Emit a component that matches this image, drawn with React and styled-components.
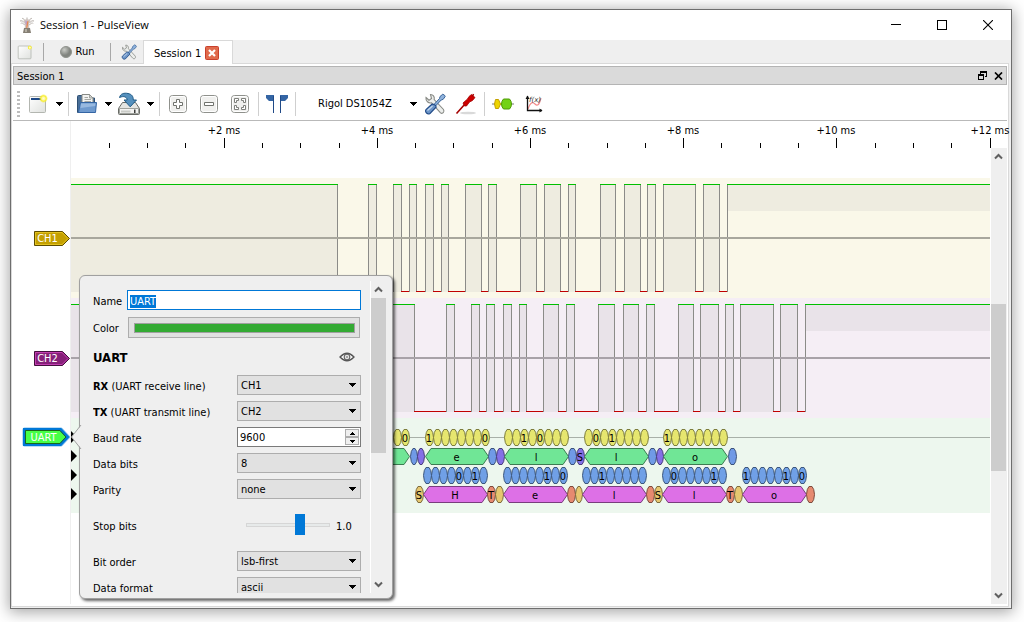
import React, { useEffect, useRef } from "react";
import styled, { createGlobalStyle } from "styled-components";

const UI_FONT = '"DejaVu Sans Condensed", "DejaVu Sans", sans-serif';

const GlobalStyle = createGlobalStyle`
  *, *::before, *::after { box-sizing: border-box; }
  body { margin: 0; background: #fff; font: 11px/14px ${UI_FONT}; color: #000; }
  button, input, select { font: inherit; color: inherit; margin: 0; border-radius: 0; }
  svg { display: block; flex: none; }
`;

/* ---------- window frame ---------- */

const Desktop = styled.div`
  display: flex;
  min-height: 100vh;
  padding: 9px 12px 13px 10px;
`;

const Window = styled.main`
  display: flex;
  flex-direction: column;
  flex: 1;
  min-width: 0;
  border: 1px solid #6e6e6e;
  background: #efefef;
  box-shadow: 0 2px 14px 1px rgba(0, 0, 0, 0.36);
`;

const TitleBar = styled.header`
  display: flex;
  align-items: center;
  height: 30px;
  padding-left: 8px;
  background: #fff;
`;

const Title = styled.h1`
  flex: 1;
  margin: 0;
  padding-left: 5px;
  font: 400 11px/14px "Open Sans", "Noto Sans", sans-serif;
`;

const CaptionButton = styled.button`
  display: grid;
  place-items: center;
  width: 46px;
  height: 30px;
  padding: 0;
  border: 0;
  background: none;
`;

/* ---------- session tabs ---------- */

const TabRow = styled.div`
  display: flex;
  align-items: center;
  height: 23px;
  padding-left: 2px;
`;

const FlatButton = styled.button`
  display: flex;
  align-items: center;
  justify-content: center;
  gap: 4px;
  width: ${(p) => p.$w || 24}px;
  height: 22px;
  padding: 0;
  border: 0;
  background: none;
`;

const TabDivider = styled.span`
  width: 1px;
  height: 18px;
  margin: 0 6px;
  background: #a8a8a8;
`;

const Tab = styled.div`
  display: flex;
  align-items: center;
  align-self: flex-start;
  gap: 4px;
  height: 24px;
  margin-left: 2px;
  padding: 0 13px 0 10px;
  border: 1px solid #d9d9d9;
  border-bottom: 0;
  background: #fff;
  position: relative;
`;

const TabName = styled.span`
  padding-top: 2px;
`;

const CloseTab = styled.button`
  display: block;
  padding: 0;
  border: 0;
  background: none;
`;

const Pane = styled.section`
  display: flex;
  flex-direction: column;
  flex: 1;
  margin: 0 2px 1px 0;
  padding: 2px 1px 2px;
  border: 1px solid #d9d9d9;
  background: #fff;
`;

const DockTitle = styled.div`
  display: flex;
  align-items: center;
  gap: 2px;
  height: 19px;
  padding: 0 1px 0 3px;
  border: 1px solid #b4b4b4;
  background: #dadada;
`;

const DockName = styled.h2`
  flex: 1;
  margin: 0;
  padding-top: 2px;
  font: inherit;
`;

const DockButton = styled.button`
  display: grid;
  place-items: center;
  width: 14px;
  height: 15px;
  padding: 0;
  border: 0;
  background: none;
`;

/* ---------- tool bar ---------- */

const ToolBar = styled.div`
  display: flex;
  align-items: center;
  gap: 2px;
  height: 36px;
  padding: 2px 0 0 4px;
  border-bottom: 1px solid #b9b9b9;
`;

const Grip = styled.span`
  width: 3px;
  height: 26px;
  margin-right: 4px;
  background: repeating-linear-gradient(#bdbdbd 0 2px, #fff 2px 4px);
`;

const IconButton = styled.button`
  display: grid;
  place-items: center;
  width: 24px;
  height: 28px;
  padding: 0;
  border: 0;
  background: none;
`;

const MenuButton = styled(IconButton)`
  width: 14px;
`;

const Divider = styled.span`
  width: 1px;
  height: 24px;
  margin: 0 4px 0 ${(p) => (p.$tight ? 0 : 4)}px;
  background: #cfcfcf;
`;

const ButtonGroup = styled.div`
  display: flex;
  gap: 7px;
`;

const DeviceButton = styled.button`
  display: flex;
  align-items: center;
  justify-content: space-between;
  width: 119px;
  height: 28px;
  padding: 0 4px 0 16px;
  border: 0;
  background: none;
`;

/* ---------- signal view ---------- */

const View = styled.div`
  display: flex;
  flex: 1;
  position: relative;
`;

const LabelColumn = styled.div`
  width: 58px;
  padding-top: 57px;
  border-right: 1px solid #efefef;
`;

const LabelRow = styled.div`
  display: flex;
  justify-content: flex-end;
  align-items: ${(p) => (p.$top ? "flex-start" : "center")};
  height: ${(p) => p.$h}px;
  padding-top: ${(p) => (p.$top ? 9 : 0)}px;
`;

const TagButton = styled.button`
  display: grid;
  align-items: center;
  padding: 0;
  border: 0;
  background: none;
  color: #fff;

  > * { grid-area: 1 / 1; }
`;

const TagText = styled.span`
  padding: 2px ${(p) => (p.$wide ? 5 : 9)}px 0 0;
  text-align: center;
`;

const PlotColumn = styled.div`
  display: flex;
  flex-direction: column;
  flex: 1;
  min-width: 0;
`;

const PlotBody = styled.div`
  display: flex;
  flex: 1;
  gap: 1px;
`;

const Tracks = styled.div`
  flex: 1;
  min-width: 0;
  padding-top: 30px;
`;

const Track = styled.svg`
  width: 100%;
  height: ${(p) => p.$h}px;
  background: ${(p) => p.$bg};
`;

const RulerSvg = styled.svg`
  width: 100%;
  height: 27px;
  overflow: visible;
`;

/* ---------- scroll bar ---------- */

const ScrollTrack = styled.div`
  display: flex;
  flex-direction: column;
  width: ${(p) => p.$w}px;
  background: #efefef;
`;

const ScrollArrow = styled.button`
  display: grid;
  place-items: center;
  width: 15px;
  height: 17px;
  padding: 0;
  border: 0;
  background: none;
`;

const ScrollSpace = styled.div`
  flex: ${(p) => p.$part} 1 0;
`;

const ScrollThumb = styled(ScrollSpace)`
  width: 15px;
  background: #cdcdcd;
`;

/* ---------- decoder popup ---------- */

const Popup = styled.aside`
  position: absolute;
  left: 66px;
  top: 154px;
  display: flex;
  width: 314px;
  height: 324px;
  padding: 5px 5px 5px 13px;
  border: 1px solid #a0a0a0;
  border-radius: 6px;
  background: #efefef;
  box-shadow: 2px 2px 3px rgba(0, 0, 0, 0.6);
`;

const PopupPointer = styled.svg`
  position: absolute;
  left: -9px;
  top: 148px;
`;

const Form = styled.form`
  flex: 1;
  min-width: 0;
  overflow: hidden;
  padding: 9px 9px 0 0;
  border-right: 1px solid #fff;
`;

const Row = styled.div`
  display: flex;
  align-items: center;
  height: ${(p) => p.$h || 20}px;
  margin-bottom: 6px;
`;

const Label = styled.label`
  width: ${(p) => p.$w || 144}px;
  flex: none;
  white-space: nowrap;
  padding-top: 3px;
`;

const NameInput = styled.input`
  flex: 1;
  min-width: 0;
  height: 20px;
  padding: 2px 2px 0;
  border: 1px solid #0078d7;
  background: #fff;
  outline: 0;

  &::selection { background: #0078d7; color: #fff; }
`;

const ColorButton = styled.button`
  flex: 1;
  height: 21px;
  padding: 5px 4px 5px 5px;
  margin: 0 1px;
  border: 1px solid #adadad;
  background: #e1e1e1;
`;

const Swatch = styled.span`
  display: block;
  height: 10px;
  border: 1px solid #a0a0a0;
  background: #33aa33;
`;

const DecoderHeading = styled.div`
  display: flex;
  align-items: center;
  justify-content: space-between;
  height: 26px;
  padding-right: 6px;
  margin: 1px 0 5px;
`;

const DecoderName = styled.h3`
  margin: 0;
  padding-top: 2px;
  font: 700 13px/16px ${UI_FONT};
`;

const EyeButton = styled.button`
  padding: 0;
  border: 0;
  background: none;
`;

const SelectBox = styled.div`
  display: grid;
  align-items: center;
  flex: 1;

  > * { grid-area: 1 / 1; }
  > svg { justify-self: end; margin-right: 5px; pointer-events: none; }
`;

const Select = styled.select`
  appearance: none;
  width: 100%;
  height: 20px;
  padding: 2px 3px 0;
  border: 1px solid #adadad;
  background: #e1e1e1;
`;

const SpinBox = styled.div`
  display: flex;
  align-items: center;
  flex: 1;
  min-width: 0;
  height: 20px;
  padding: 1px;
  border: 1px solid #7a7a7a;
  background: #fff;
`;

const SpinInput = styled.input`
  flex: 1;
  min-width: 0;
  padding: 2px 1px 0;
  border: 0;
  outline: 0;
  background: none;
`;

const SpinButtons = styled.div`
  display: flex;
  flex-direction: column;
  flex: none;
`;

const SpinButton = styled.button`
  display: grid;
  place-items: center;
  width: 14px;
  height: 8px;
  padding: 0;
  border: 1px solid #adadad;
  background: #efefef;
`;

const Slider = styled.input`
  appearance: none;
  width: 84px;
  height: 21px;
  margin: 0 6px 0 9px;
  background: none;

  &::-webkit-slider-runnable-track {
    height: 4px;
    border: 1px solid #d6d6d6;
    background: #e7eaea;
  }
  &::-webkit-slider-thumb {
    appearance: none;
    width: 10px;
    height: 21px;
    margin-top: -10px;
    background: #0078d7;
  }
`;

const SliderValue = styled.output`
  padding-top: 3px;
`;

/* ---------- icons ---------- */

const DownArrow = () => (
  <svg width="7" height="4" shapeRendering="crispEdges">
    <path d="M0 0h7v1h-1v1h-1v1h-1v1h-1v-1h-1v-1h-1v-1h-1z" fill="#000" />
  </svg>
);

const SmallArrow = ({ up }) => (
  <svg width="5" height="3" shapeRendering="crispEdges">
    <path d={up ? "M2 0h1v1h1v1h1v1h-5v-1h1v-1h1z" : "M0 0h5v1h-1v1h-1v1h-1v-1h-1v-1h-1z"} />
  </svg>
);

const Chevron = ({ down }) => (
  <svg width="9" height="7" viewBox="0 0 9 7">
    <path d={down ? "M1 1.5L4.500 5L8 1.5" : "M1 5.500L4.500 2L8 5.500"} fill="none" stroke="#606060" strokeWidth="2" />
  </svg>
);

const AppIcon = () => (
  <svg width="16" height="16" viewBox="0 0 16 16">
    <g fill="none" stroke="#b5aea8" strokeWidth="1">
      <path d="M7 7C5 6 4 3 1 4M7 6C6 4 5 1 3 1.500M8 6V0.500M9 6C10 4 11 1 13 1.500M9 7C11 6 12 3 15 4M6 8C4 7 3 5 2 6.500M10 8C12 7 13 5 14 6.500" />
    </g>
    <path d="M4.500 3.500Q8 1 11.500 3.500L9.800 7L10.500 12H5.500L6.200 7Z" fill="#cfc4bf" />
    <path d="M6.500 3.500L8 4.500L7.500 9L6.500 7Z" fill="#b99ad0" />
    <path d="M8 4.500L9.500 4L9 8L8 12H7Z" fill="#e58a55" />
    <path d="M5 11H11L12 16H4Z" fill="#857f74" />
    <path d="M6 12H8V15H6Z" fill="#b3ada0" />
  </svg>
);

const MinimizeIcon = () => (
  <svg width="10" height="10" shapeRendering="crispEdges"><path d="M0 4h10v1H0z" /></svg>
);
const MaximizeIcon = () => (
  <svg width="10" height="10" shapeRendering="crispEdges">
    <path d="M0 0h10v10H0zM1 1v8h8V1z" fillRule="evenodd" />
  </svg>
);
const CloseIcon = () => (
  <svg width="10" height="10"><path d="M0 0l10 10M10 0l-10 10" stroke="#000" strokeWidth="1.100" /></svg>
);

const FloatIcon = () => (
  <svg width="9" height="9" shapeRendering="crispEdges">
    <path d="M2 0h7v6H7V5h1V2H3v1H2zM0 3h6v6H0zM1 5v3h4V5z" fillRule="evenodd" />
  </svg>
);
const DockCloseIcon = () => (
  <svg width="9" height="8"><path d="M1 .5L8 7.500M8 .5L1 7.500" stroke="#000" strokeWidth="1.700" /></svg>
);

const PageIcon = ({ size = 20, bar }) => (
  <svg width={size} height={size} viewBox="0 0 20 20">
    <defs>
      <linearGradient id="paper" x1="0" y1="0" x2="1" y2="1">
        <stop offset="0" stopColor="#fff" />
        <stop offset="1" stopColor="#dfe1de" />
      </linearGradient>
      <radialGradient id="glow">
        <stop offset="0" stopColor="#ffffd0" />
        <stop offset=".35" stopColor="#fff6a0" />
        <stop offset=".6" stopColor="#f7ee2c" />
        <stop offset="1" stopColor="#f7ee3c" stopOpacity="0" />
      </radialGradient>
    </defs>
    <rect x="1.500" y="2.500" width="16" height="16" rx="1" fill="url(#paper)" stroke="#b3b6b0" />
    {bar && <path d="M3 4h14v2H3z" fill="#204a87" />}
    <circle cx={bar ? 15.5 : 16} cy="4.500" r={bar ? 4.5 : 3} fill="url(#glow)" />
  </svg>
);

const RunIcon = () => (
  <svg width="12" height="12" viewBox="0 0 12 12">
    <defs>
      <radialGradient id="ball" cx=".35" cy=".3">
        <stop offset="0" stopColor="#c9cbc6" />
        <stop offset="1" stopColor="#81847f" />
      </radialGradient>
    </defs>
    <circle cx="6" cy="6" r="5.500" fill="url(#ball)" stroke="#90938d" />
  </svg>
);

const ToolsIcon = ({ size }) => (
  <svg width={size} height={size} viewBox="0 0 22 22">
    <path
      d="M2 4.500L5 7.200L7.500 5.500L6.500 1.500C9 1.500 10.800 3.500 10.200 6.500L19.500 16.500C21 19 18.500 21.500 16.300 19.600L7.500 9.800C4.500 10.500 1.500 8 2 4.500Z"
      fill="#eceeec" stroke="#888a85" strokeWidth="1.100"
    />
    <path d="M20.500 2.200L18.800 1.200L16 3.500L15.500 5.500L9.500 12L11 13.500L17.200 7L19.200 6.300L21.200 3.500Z" fill="#8fb2dc" stroke="#3a6599" strokeWidth="1" />
    <path d="M10 11.500C11.500 12 12 13 12.200 14L6 20.500C3.500 22 .5 19 2 16.500L7 12C8 11 9 11 10 11.500Z" fill="#6c95c8" stroke="#204a87" strokeWidth="1.100" />
    <path d="M3.500 17.500L8.500 13" stroke="#c7daf0" strokeWidth="1.200" />
  </svg>
);

const TabCloseIcon = () => (
  <svg width="14" height="14" viewBox="0 0 14 14">
    <rect x=".5" y=".5" width="13" height="13" rx="1" fill="#e06a4c" stroke="#c8402c" />
    <path d="M4 4l6 6M10 4l-6 6" stroke="#fff" strokeWidth="2.200" />
  </svg>
);

const OpenIcon = () => (
  <svg width="22" height="22" viewBox="0 0 22 22">
    <path d="M1.500 19.500V3.500Q1.500 2.500 2.500 2.500H7L8.500 5H18.500V19.500Z" fill="#4a6f96" stroke="#2d4f74" />
    <path d="M6 12V1.500H13.500L17 5V12Z" fill="#f3f3f1" stroke="#888a85" />
    <path d="M8.500 4.500H12M8.500 6.500H15M8.500 8.500H15" stroke="#a5a7a2" strokeWidth="1" />
    <path d="M13.500 1.500V5H17Z" fill="#d5d7d2" stroke="#888a85" strokeWidth=".7" />
    <path d="M4.500 9.500H20.500L19.500 19.500H2.500Z" fill="#6f9ace" stroke="#3465a4" />
    <path d="M5 10.500H19.500L19.200 13L4.500 15Z" fill="#98b9e0" />
  </svg>
);

const SaveIcon = () => (
  <svg width="24" height="24" viewBox="0 0 24 24">
    <path d="M5.500 10.500H18.500L22.500 16.500V21.500Q22.500 22.500 21.500 22.500H2.500Q1.500 22.500 1.500 21.500V16.500Z" fill="#e4e5e2" stroke="#686a65" />
    <path d="M2.500 16.500H21.500V21.500H2.500Z" fill="#f4f4f2" stroke="#8c8e89" strokeWidth=".8" />
    <path d="M4 18.500H13.500V20.500H4Z" fill="#c9cbc6" />
    <path d="M17 17.500H18.500V21H17Z" fill="#3c3d3a" />
    <path d="M2.500 5.500C3.500 1.500 7 .7 11 1.500C15 2.300 16.300 4.500 16.300 8H19.500L13.200 14.800L7 8H10.200C10 5 7 3.500 2.500 5.500Z" fill="#5590bd" stroke="#1f5a86" />
  </svg>
);

const ZoomIcon = ({ kind }) => (
  <svg width="20" height="20" viewBox="0 0 20 20">
    <rect x="1.500" y="1.500" width="17" height="17" rx="3" fill="#f0f0ee" stroke="#8f918c" />
    <rect x="2.500" y="2.500" width="15" height="15" rx="2" fill="none" stroke="#fff" />
    {kind === "in" && (
      <path d="M8.500 5.500h3v3h3v3h-3v3h-3v-3h-3v-3h3z" fill="#fff" stroke="#70726d" />
    )}
    {kind === "out" && <path d="M5.500 8.500h9v3h-9z" fill="#fff" stroke="#70726d" />}
    {kind === "fit" && (
      <path
        d="M4.500 8.500v-4h4v2h-2v2zM11.500 4.500h4v4h-2v-2h-2zM4.500 11.500h2v2h2v2h-4zM13.500 11.500h2v4h-4v-2h2z"
        fill="#fff" stroke="#70726d" strokeWidth=".9"
      />
    )}
  </svg>
);

const CursorsIcon = () => (
  <svg width="22" height="20" viewBox="0 0 22 20">
    <path d="M0 1H8V19H7V7H3L0 4Z" fill="#3465a4" />
    <path d="M22 1H14V19H15V7H19L22 4Z" fill="#3465a4" />
    <path d="M7.500 2V19M14.500 2V19" stroke="#204a87" strokeWidth="1" />
  </svg>
);

const ProbeIcon = () => (
  <svg width="22" height="22" viewBox="0 0 22 22">
    <ellipse cx="13" cy="20" rx="8" ry="1.300" fill="#d9d9d9" />
    <path d="M1.500 20.500L10.500 10.500" stroke="#a40000" strokeWidth="1.600" />
    <path d="M8 10L12.500 6L14 3.500L16.500 1.500L20 4.500L17.500 7.500L14.500 9L11.500 13L9.500 13Z" fill="#cc0000" stroke="#a40000" strokeWidth=".8" />
    <path d="M17.500 3.500L18.500 1" stroke="#a40000" strokeWidth="1.500" />
  </svg>
);

const DecodeIcon = () => (
  <svg width="22" height="12" viewBox="0 0 22 12">
    <path d="M0 6H22" stroke="#777" />
    <path d="M3.500 1.500H6.500L8.500 6L6.500 10.500H3.500L2.500 6Z" fill="#edd400" stroke="#c4a000" />
    <path d="M11.500 1H17.500Q19.500 3 19.500 6Q19.500 9 17.500 11H11.500Q9.500 9 9.500 6Q9.500 3 11.500 1Z" fill="#73d216" stroke="#4e9a06" />
  </svg>
);

const MathIcon = () => (
  <svg width="18" height="18" viewBox="0 0 18 18">
    <path d="M3 14C6 6 8 7 10 9S14 11 16 3" fill="none" stroke="#f28a8a" strokeWidth="1.200" />
    <path d="M2.500 1V15.500H17" fill="none" stroke="#111" strokeWidth="1.300" />
    <path d="M.5 4L2.500 .5L4.500 4ZM14.500 13.500L17.500 15.500L14.500 17.500Z" fill="#111" />
    <text x="4" y="7" fontSize="7" fontStyle="italic" fontFamily="DejaVu Sans, sans-serif" fill="#333">f(x)</text>
  </svg>
);

const EyeIcon = () => (
  <svg width="16" height="10" viewBox="0 0 16 10">
    <path d="M1 5Q8 -2.500 15 5Q8 12.500 1 5Z" fill="#fafafa" stroke="#555" strokeWidth="1.300" />
    <circle cx="8" cy="5" r="2.800" fill="#e4e4e4" stroke="#666" strokeWidth="1.100" />
    <circle cx="8" cy="5" r=".8" fill="#555" />
  </svg>
);

/* ---------- data: x values count from the left edge of the plot ---------- */

const CH1 = [
  [0, 266], [297, 305], [322, 330], [338, 345], [354, 362], [370, 377], [394, 410], [417, 425],
  [449, 465], [473, 489], [497, 504], [529, 544], [553, 569], [576, 584], [592, 624], [632, 648], [656, null],
];
const CH2 = [
  [0, 343], [375, 383], [400, 408], [415, 423], [432, 440], [448, 455], [472, 487], [495, 503],
  [527, 543], [552, 567], [575, 583], [607, 622], [629, 647], [654, 662], [669, 702], [709, 726], [734, null],
];

const RX_BITS = [
  [274, { 7: "0" }],
  [354, { 0: "1", 7: "0" }],
  [433, { 2: "1", 4: "0" }],
  [513, { 1: "0", 3: "1" }],
  [592, { 0: "1" }],
];
const TX_BITS = [
  [352, { 4: "0", 6: "1" }],
  [432, { 5: "1", 7: "0" }],
  [511, { 2: "1" }],
  [591, { 1: "0", 6: "1" }],
  [671, { 0: "1", 5: "1", 7: "0" }],
];

const C = {
  yellow: ["#e6e66f", "#7d7d3c"],
  green: ["#70e696", "#3d7d52"],
  blue: ["#709ae6", "#3d547d"],
  purple: ["#8470e6", "#483d7d"],
  azure: ["#70a0e6", "#3d577d"],
  magenta: ["#dd70e6", "#793d7d"],
  tan: ["#e6c770", "#7d6c3d"],
  salmon: ["#e68a70", "#7d4b3d"],
};

const RX_DATA = [
  [274, 338, "green", "H"], [339, 346, "blue"], [346, 353, "purple"],
  [354, 417, "green", "e"], [417, 425, "blue"], [425, 433, "purple"],
  [433, 497, "green", "l"], [497, 505, "blue"], [505, 513, "purple", "S"],
  [513, 577, "green", "l"], [577, 585, "blue"], [585, 592, "purple"],
  [592, 656, "green", "o"], [657, 665, "blue"],
];
const TX_DATA = [
  [344, 352, "tan", "S"], [352, 416, "magenta", "H"], [416, 424, "salmon", "T"], [424, 432, "tan"],
  [432, 496, "magenta", "e"], [496, 504, "salmon"], [504, 511, "tan"],
  [511, 575, "magenta", "l"], [575, 583, "salmon"], [583, 591, "tan", "S"],
  [591, 655, "magenta", "l"], [655, 663, "salmon", "T"], [663, 671, "tan"],
  [671, 735, "magenta", "o"], [735, 743, "salmon"],
];

/* ---------- plot parts ---------- */

function Waveform({ pulses, bg, fill, line }) {
  return (
    <Track $h={120} $bg={bg} shapeRendering="crispEdges">
      {pulses.map(([a, b], i) => (
        <rect key={i} x={a} y="7" width={b === null ? "100%" : b - a} height={b === null ? 26 : 107} fill={fill} />
      ))}
      {pulses.map(([a, b], i) => {
        const next = pulses[i + 1];
        return (
          <g key={i}>
            {i > 0 && <rect x={a} y="7" width="1" height="107" fill="#8b8b88" />}
            {b !== null && <rect x={b} y="7" width="1" height="107" fill="#8b8b88" />}
            <rect x={a} y="6" width={b === null ? "100%" : b - a + 1} height="1" fill="#00c000" />
            {next && <rect x={b} y="113" width={next[0] - b + 1} height="1" fill="#c00000" />}
          </g>
        );
      })}
      <rect x="0" y="59" width="100%" height="2" fill={line} />
    </Track>
  );
}

function annotationPath(l, r, y) {
  const top = y + 0.5;
  const mid = y + 8.5;
  const bottom = y + 16.5;
  if (r - l > 20) {
    return `M${l} ${mid}L${l + 5.5} ${top}H${r - 5.5}L${r} ${mid}L${r - 5.5} ${bottom}H${l + 5.5}Z`;
  }
  return `M${l} ${mid}L${l + 0.8} ${top + 3}L${l + 2.5} ${top}H${r - 2.5}L${r - 0.8} ${top + 3}L${r} ${mid}L${r - 0.8} ${bottom - 3}L${r - 2.5} ${bottom}H${l + 2.5}L${l + 0.8} ${bottom - 3}Z`;
}

function Annotation({ x1, x2, y, color, text }) {
  const [fill, stroke] = C[color];
  return (
    <g>
      <path d={annotationPath(x1 + 0.5, x2 + 0.5, y)} fill={fill} stroke={stroke} />
      {text && (
        <text x={(x1 + x2) / 2} y={y + 13} textAnchor="middle">{text}</text>
      )}
    </g>
  );
}

const BitRow = ({ groups, y, color }) =>
  groups.map(([start, texts]) =>
    Array.from({ length: 8 }, (_, i) => (
      <Annotation key={`${start}-${i}`} x1={start + i * 8} x2={start + i * 8 + 8} y={y} color={color} text={texts[i]} />
    ))
  );

const DataRow = ({ items, y }) =>
  items.map(([a, b, color, text]) => <Annotation key={a} x1={a} x2={b} y={y} color={color} text={text} />);

function DecoderTrack() {
  return (
    <Track $h={95} $bg="#edf7ee" fontSize="11">
      <rect x="0" y="19" width="100%" height="1" fill="#a8b0a8" />
      {[19, 38, 57, 76].map((y) => (
        <path key={y} d={`M0 ${y - 6}L6 ${y}L0 ${y + 6}Z`} />
      ))}
      <BitRow groups={RX_BITS} y={11} color="yellow" />
      <DataRow items={RX_DATA} y={30} />
      <BitRow groups={TX_BITS} y={49} color="azure" />
      <DataRow items={TX_DATA} y={68} />
    </Track>
  );
}

function Ruler() {
  const ticks = Array.from({ length: 24 }, (_, i) => i + 1);
  return (
    <RulerSvg fontSize="11">
      {ticks.map((n) => {
        const major = n % 4 === 0;
        const x = Math.floor((n * 919) / 24);
        return (
          <g key={n}>
            <rect x={x} y={major ? 17 : 22} width="1" height={major ? 10 : 5} />
            {major && <text x={x} y="13" textAnchor="middle">{`+${n / 2} ms`}</text>}
          </g>
        );
      })}
    </RulerSvg>
  );
}

function Tag({ name, fill, light, dark }) {
  return (
    <TagButton type="button">
      <svg width="36" height="15" viewBox="0 0 36 15">
        <path d="M.5 .5H28.500L35.500 7.500L28.500 14.500H.5Z" fill={fill} stroke={dark} />
        <path d="M1.500 1.500H28L34 7.500L28 13.500H1.500Z" fill="none" stroke={light} />
      </svg>
      <TagText>{name}</TagText>
    </TagButton>
  );
}

function SelectedTag({ name }) {
  return (
    <TagButton type="button">
      <svg width="48" height="20" viewBox="0 0 48 20">
        <path d="M2.500 2.500H39L46 10L39 17.500H2.500Z" fill="#47ff47" stroke="#7fbcec" strokeWidth="4" strokeLinejoin="round" />
        <path d="M2.500 2.500H38.500L45.500 10L38.500 17.500H2.500Z" fill="#47ff47" stroke="#0078d7" strokeWidth="3" />
        <path d="M3.500 3.500H38L44 10L38 16.500H3.500Z" fill="none" stroke="#196619" />
      </svg>
      <TagText $wide>{name}</TagText>
    </TagButton>
  );
}

function ScrollBar({ width, parts }) {
  return (
    <ScrollTrack $w={width}>
      <ScrollArrow type="button" aria-label="Scroll up"><Chevron /></ScrollArrow>
      <ScrollSpace $part={parts[0]} />
      <ScrollThumb $part={parts[1]} />
      <ScrollSpace $part={parts[2]} />
      <ScrollArrow type="button" aria-label="Scroll down"><Chevron down /></ScrollArrow>
    </ScrollTrack>
  );
}

function SelectRow({ id, label, value }) {
  return (
    <Row>
      <Label htmlFor={id}>{label}</Label>
      <SelectBox>
        <Select id={id} defaultValue={value}>
          <option>{value}</option>
        </Select>
        <DownArrow />
      </SelectBox>
    </Row>
  );
}

function DecoderPopup() {
  const nameRef = useRef(null);
  useEffect(() => {
    nameRef.current.focus();
    nameRef.current.select();
  }, []);

  return (
    <Popup>
      <PopupPointer width="11" height="26" viewBox="0 0 11 26">
        <path d="M11 .5L.5 13L11 25.500Z" fill="#efefef" />
        <path d="M10 1L.5 13L10 25" fill="none" stroke="#a0a0a0" />
      </PopupPointer>
      <Form>
        <Row>
          <Label $w={34} htmlFor="name">Name</Label>
          <NameInput id="name" ref={nameRef} defaultValue="UART" />
        </Row>
        <Row $h={22}>
          <Label $w={34} htmlFor="color">Color</Label>
          <ColorButton id="color" type="button"><Swatch /></ColorButton>
        </Row>
        <DecoderHeading>
          <DecoderName>UART</DecoderName>
          <EyeButton type="button" aria-label="Show decoder"><EyeIcon /></EyeButton>
        </DecoderHeading>
        <SelectRow id="rx" label={<><b>RX</b> (UART receive line)</>} value="CH1" />
        <SelectRow id="tx" label={<><b>TX</b> (UART transmit line)</>} value="CH2" />
        <Row>
          <Label htmlFor="baud">Baud rate</Label>
          <SpinBox>
            <SpinInput id="baud" defaultValue="9600" />
            <SpinButtons>
              <SpinButton type="button" aria-label="Increase"><SmallArrow up /></SpinButton>
              <SpinButton type="button" aria-label="Decrease"><SmallArrow /></SpinButton>
            </SpinButtons>
          </SpinBox>
        </Row>
        <SelectRow id="databits" label="Data bits" value="8" />
        <SelectRow id="parity" label="Parity" value="none" />
        <Row $h={40}>
          <Label htmlFor="stopbits">Stop bits</Label>
          <Slider id="stopbits" type="range" min="0" max="1.5" step="0.5" defaultValue="1" />
          <SliderValue htmlFor="stopbits">1.0</SliderValue>
        </Row>
        <SelectRow id="bitorder" label="Bit order" value="lsb-first" />
        <SelectRow id="format" label="Data format" value="ascii" />
      </Form>
      <ScrollBar width={16} parts={[0, 156, 123]} />
    </Popup>
  );
}

export default function App() {
  return (
    <Desktop>
      <GlobalStyle />
      <Window>
        <TitleBar>
          <AppIcon />
          <Title>Session 1 - PulseView</Title>
          <CaptionButton type="button" aria-label="Minimize"><MinimizeIcon /></CaptionButton>
          <CaptionButton type="button" aria-label="Maximize"><MaximizeIcon /></CaptionButton>
          <CaptionButton type="button" aria-label="Close"><CloseIcon /></CaptionButton>
        </TitleBar>

        <TabRow>
          <FlatButton type="button" aria-label="New session"><PageIcon size={16} /></FlatButton>
          <TabDivider />
          <FlatButton type="button" $w={54}><RunIcon />Run</FlatButton>
          <TabDivider />
          <FlatButton type="button" aria-label="Settings"><ToolsIcon size={16} /></FlatButton>
          <Tab>
            <TabName>Session 1</TabName>
            <CloseTab type="button" aria-label="Close tab"><TabCloseIcon /></CloseTab>
          </Tab>
        </TabRow>

        <Pane>
          <DockTitle>
            <DockName>Session 1</DockName>
            <DockButton type="button" aria-label="Float"><FloatIcon /></DockButton>
            <DockButton type="button" aria-label="Close"><DockCloseIcon /></DockButton>
          </DockTitle>

          <ToolBar>
            <Grip />
            <IconButton type="button" aria-label="New view"><PageIcon bar /></IconButton>
            <MenuButton type="button" aria-label="New view menu"><DownArrow /></MenuButton>
            <Divider $tight />
            <IconButton type="button" aria-label="Open"><OpenIcon /></IconButton>
            <MenuButton type="button" aria-label="Open menu"><DownArrow /></MenuButton>
            <IconButton type="button" aria-label="Save"><SaveIcon /></IconButton>
            <MenuButton type="button" aria-label="Save menu"><DownArrow /></MenuButton>
            <Divider $tight />
            <ButtonGroup>
              <IconButton type="button" aria-label="Zoom in"><ZoomIcon kind="in" /></IconButton>
              <IconButton type="button" aria-label="Zoom out"><ZoomIcon kind="out" /></IconButton>
              <IconButton type="button" aria-label="Zoom to fit"><ZoomIcon kind="fit" /></IconButton>
            </ButtonGroup>
            <Divider />
            <IconButton type="button" aria-label="Show cursors"><CursorsIcon /></IconButton>
            <Divider />
            <DeviceButton type="button">Rigol DS1054Z<DownArrow /></DeviceButton>
            <ButtonGroup>
              <IconButton type="button" aria-label="Configure device"><ToolsIcon size={22} /></IconButton>
              <IconButton type="button" aria-label="Configure channels"><ProbeIcon /></IconButton>
            </ButtonGroup>
            <Divider />
            <ButtonGroup>
              <IconButton type="button" aria-label="Add decoder"><DecodeIcon /></IconButton>
              <IconButton type="button" aria-label="Add math signal"><MathIcon /></IconButton>
            </ButtonGroup>
          </ToolBar>

          <View>
            <LabelColumn>
              <LabelRow $h={120}><Tag name="CH1" fill="#c4a000" light="#e3c320" dark="#5e4d00" /></LabelRow>
              <LabelRow $h={120}><Tag name="CH2" fill="#87207a" light="#c23fb2" dark="#430f3d" /></LabelRow>
              <LabelRow $h={95} $top><SelectedTag name="UART" /></LabelRow>
            </LabelColumn>
            <PlotColumn>
              <Ruler />
              <PlotBody>
                <Tracks>
                  <Waveform pulses={CH1} bg="#faf8e9" fill="#eeece0" line="#a8a79d" />
                  <Waveform pulses={CH2} bg="#f5eef5" fill="#e9e3e9" line="#a8a2a8" />
                  <DecoderTrack />
                </Tracks>
                <ScrollBar width={16} parts={[139, 167, 116]} />
              </PlotBody>
            </PlotColumn>
            <DecoderPopup />
          </View>
        </Pane>
      </Window>
    </Desktop>
  );
}
